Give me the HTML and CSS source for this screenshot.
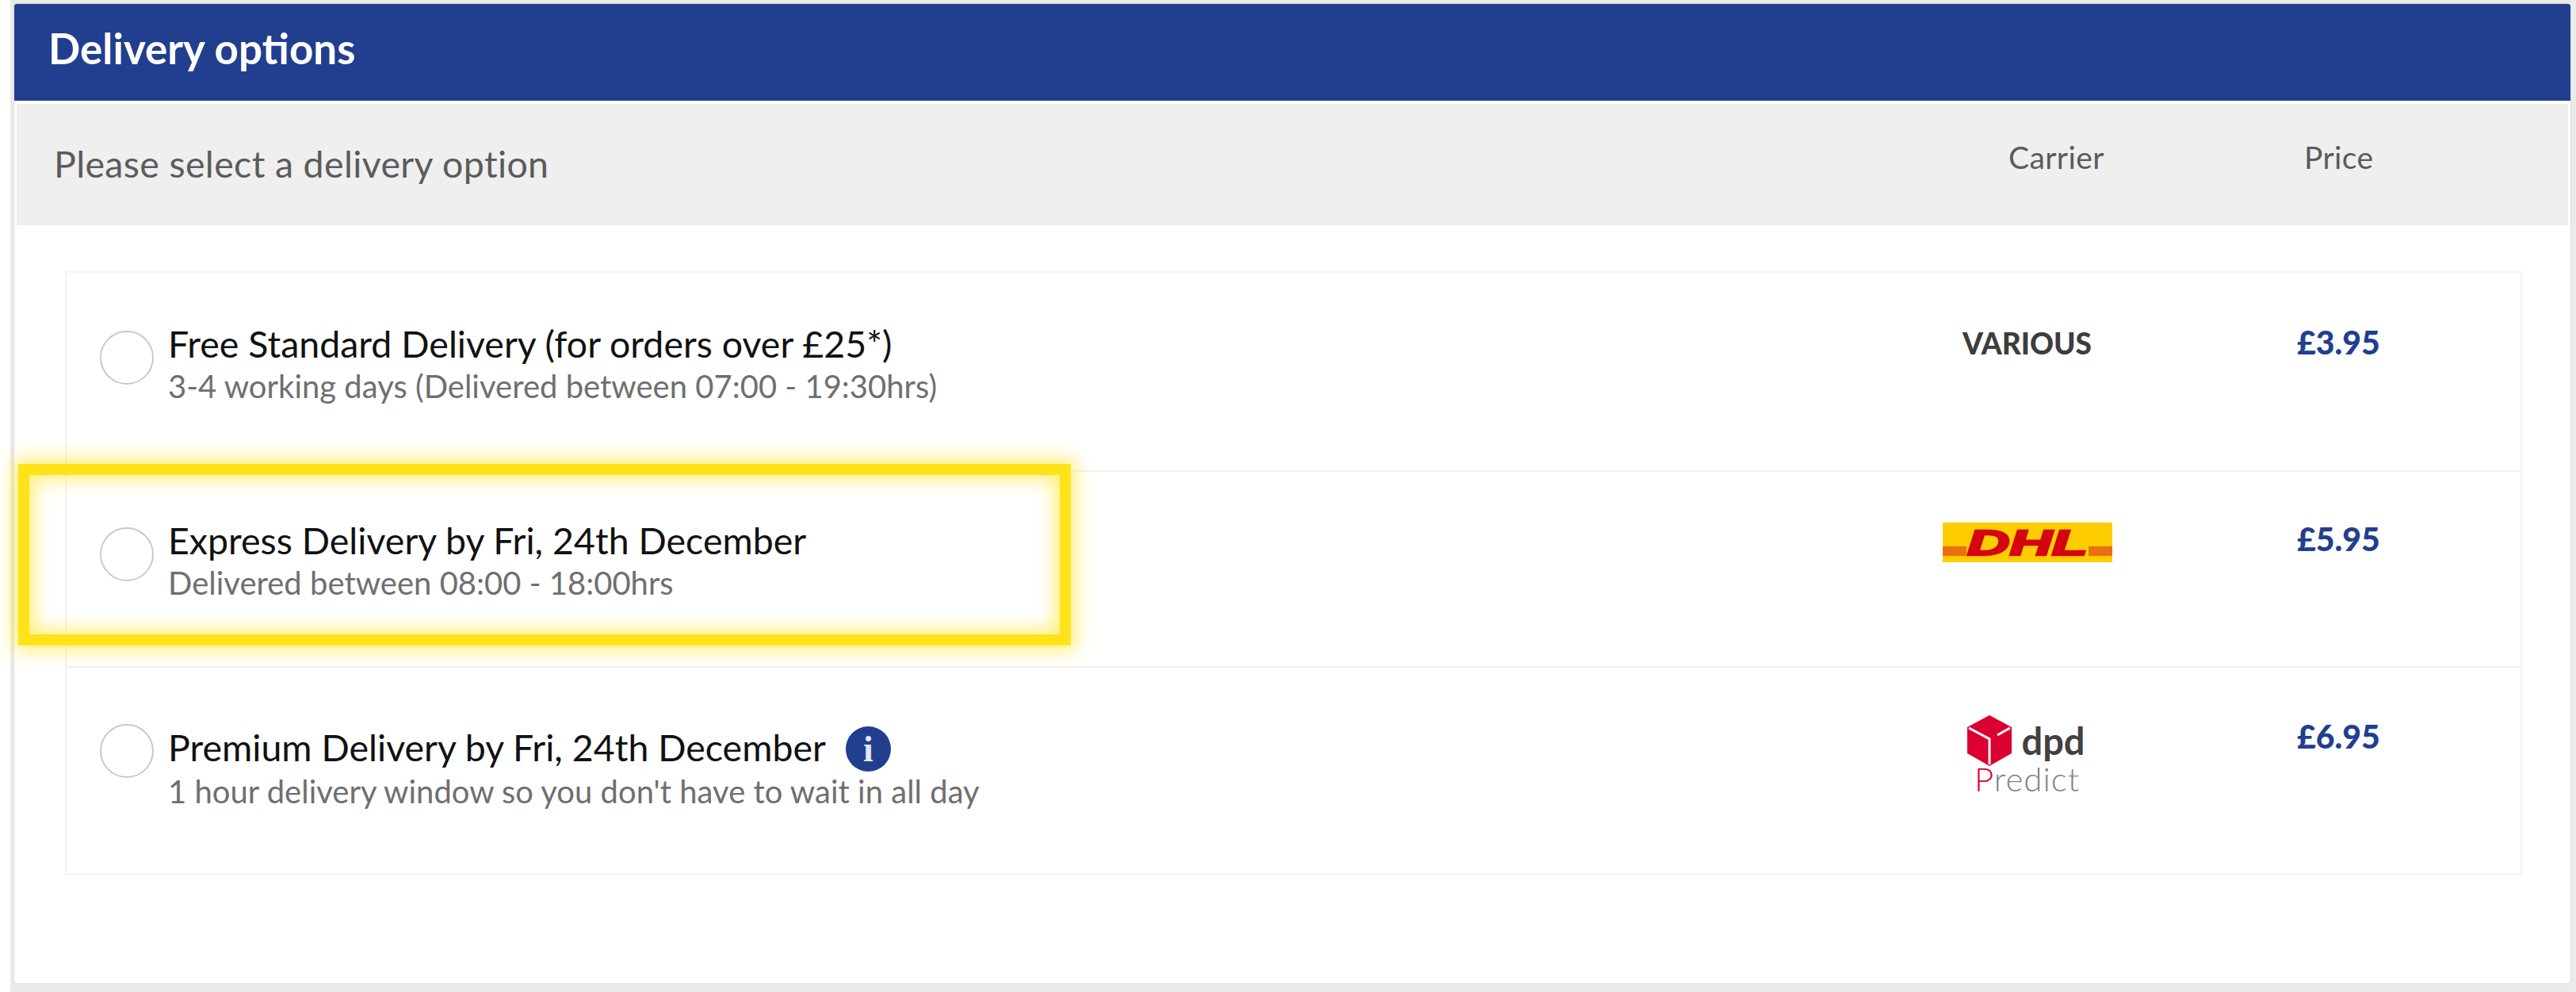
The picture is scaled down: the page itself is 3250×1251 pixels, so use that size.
FILE: index.html
```html
<!DOCTYPE html>
<html lang="en">
  <head>
    <meta charset="UTF-8" />
    <title>Delivery options</title>
    <link rel="stylesheet" href="styles.css">
  </head>
  <body>
    <div class="page">
      <section class="panel">
        <h2 class="panel-title">Delivery options</h2>
        <div class="panel-head">
          <span class="head-label">Please select a delivery option</span>
          <span class="head-carrier">Carrier</span>
          <span class="head-price">Price</span>
        </div>
        <div class="options">
          <div class="option option-standard">
            <span class="radio"></span>
            <div class="option-text">
              <div class="option-name">Free Standard Delivery (for orders over £25*)</div>
              <div class="option-note">3-4 working days (Delivered between 07:00 - 19:30hrs)</div>
            </div>
            <div class="carrier"><span class="various">VARIOUS</span></div>
            <div class="price">£3.95</div>
          </div>
          <div class="option option-express">
            <span class="radio"></span>
            <div class="option-text">
              <div class="option-name">Express Delivery by Fri, 24th December</div>
              <div class="option-note">Delivered between 08:00 - 18:00hrs</div>
            </div>
            <div class="carrier">
              <svg class="dhl" width="214" height="50" viewBox="0 0 214 50" role="img" aria-label="DHL">
                <rect width="214" height="50" fill="#ffcc00" />
                <rect y="30" width="30" height="12" fill="#e8700f" />
                <rect x="184" y="30" width="30" height="12" fill="#e8700f" />
                <text x="107" y="41" text-anchor="middle" textLength="152" lengthAdjust="spacingAndGlyphs" class="dhl-text">DHL</text>
              </svg>
            </div>
            <div class="price">£5.95</div>
          </div>
          <div class="option option-premium">
            <span class="radio"></span>
            <div class="option-text">
              <div class="option-name">Premium Delivery by Fri, 24th December <span class="info">i</span></div>
              <div class="option-note">1 hour delivery window so you don't have to wait in all day</div>
            </div>
            <div class="carrier">
              <div class="dpd">
                <div class="dpd-top">
                  <svg width="56" height="64" viewBox="0 0 56 64" aria-hidden="true">
                    <path d="M28 0 56 15V48L28 64 0 48V15Z" fill="#dc0032" />
                    <path d="M2 16 28 30V62M54 16 38 25" fill="none" stroke="#fff" stroke-width="3" />
                  </svg>
                  <span class="dpd-name">dpd</span>
                </div>
                <div class="dpd-predict"><span class="dpd-p">P</span>redict</div>
              </div>
            </div>
            <div class="price">£6.95</div>
          </div>
        </div>
      </section>
    </div>
    <div class="highlight"></div>
  </body>
</html>
```

FILE: styles.css
```css
* {
  box-sizing: border-box;
}
html,
body {
  margin: 0;
  height: 100%;
}
body {
  background-color: white;
  font-family: Lato, "Open Sans", sans-serif;
  overflow: hidden;
}
.page {
  margin-left: 13px;
  height: 1251px;
  padding: 5px 7px 11px 5px;
  background-color: #ebebeb;
}
.panel {
  height: 100%;
  background-color: white;
  border-radius: 3px;
  box-shadow: 0 0 2px #bbb;
}
.panel-title {
  margin: 0;
  height: 122px;
  padding-left: 43px;
  background-color: #223f8f;
  color: white;
  font-size: 53px;
  font-weight: 700;
  line-height: 112px;
  border-radius: 3px 3px 0 0;
}
.panel-head {
  display: grid;
  grid-template-columns: 2513px 248px 1fr;
  height: 153px;
  margin: 4px 3px 0;
  background-color: #efefef;
  color: #5b5b5b;
  font-size: 46.5px;
}
.head-label {
  padding: 48px 0 0 47px;
  line-height: 54px;
  letter-spacing: 0.35px;
}
.head-carrier,
.head-price {
  padding-top: 40px;
  font-size: 39px;
  line-height: 54px;
  letter-spacing: 0.4px;
}
.head-price {
  padding-left: 125px;
}
.options {
  margin: 58px 61px 0 64px;
  border: 2px solid #f3f3f3;
}
.option {
  display: grid;
  grid-template-columns: 132px 1965px 669px 1fr;
  padding-left: 42px;
  border-top: 2px solid #f0f0f0;
}
.option:first-child {
  border-top: none;
}
.option-standard {
  height: 249px;
  padding-top: 62px;
}
.option-express {
  height: 247px;
  padding-top: 59px;
}
.option-premium {
  height: 261px;
  padding-top: 73px;
}
.radio {
  width: 68px;
  height: 68px;
  margin-top: 11px;
  border: 2px solid #c9c9c9;
  border-radius: 50%;
}
.option-premium .radio {
  margin-top: -2px;
}
.option-text {
  margin-left: -46px;
}
.option-name {
  color: #111;
  font-size: 46.5px;
  line-height: 54px;
}
.option-note {
  margin-top: 2px;
  color: #6f6f6f;
  font-size: 40px;
  line-height: 50px;
}
.option-premium .option-note {
  margin-top: 4px;
}
.info {
  display: inline-flex;
  justify-content: center;
  width: 57px;
  height: 57px;
  margin: -8px 0 -8px 14px;
  border-radius: 50%;
  background-color: #223f8f;
  color: #e4e8f2;
  font-family: "Liberation Serif", serif;
  font-size: 46px;
  font-weight: 700;
  line-height: 57px;
  vertical-align: 0;
}
.carrier {
  text-align: center;
}
.various {
  color: #3d3d3d;
  font-size: 37px;
  font-weight: 900;
  line-height: 54px;
}
.dhl {
  display: block;
  margin: 5px auto 0;
}
.dhl-text {
  fill: #d40511;
  stroke: #d40511;
  stroke-width: 2.5px;
  font-family: "Liberation Sans", sans-serif;
  font-size: 44px;
  font-style: italic;
  font-weight: 700;
}
.dpd {
  margin-top: -13px;
}
.dpd-top {
  display: flex;
  justify-content: center;
  align-items: center;
  gap: 12px;
  padding-right: 2px;
}
.dpd-name {
  color: #414042;
  font-size: 47px;
  font-weight: 700;
  line-height: 64px;
}
.dpd-predict {
  margin-top: -2px;
  color: #808285;
  font-size: 42px;
  font-weight: 300;
  line-height: 36px;
  letter-spacing: 1px;
}
.dpd-p {
  color: #dc0032;
}
.price {
  margin-top: 3px;
  margin-left: 6px;
  color: #223f8f;
  font-size: 41px;
  font-weight: 900;
  line-height: 46px;
}
.option-premium .price {
  margin-top: -9px;
}
.highlight {
  position: absolute;
  left: 23px;
  top: 585px;
  width: 1328px;
  height: 229px;
  border: 14px solid #ffe31a;
  box-shadow: 0 0 22px 6px rgba(255, 227, 26, 0.6), inset 0 0 22px 6px rgba(255, 227, 26, 0.6);
}
```
